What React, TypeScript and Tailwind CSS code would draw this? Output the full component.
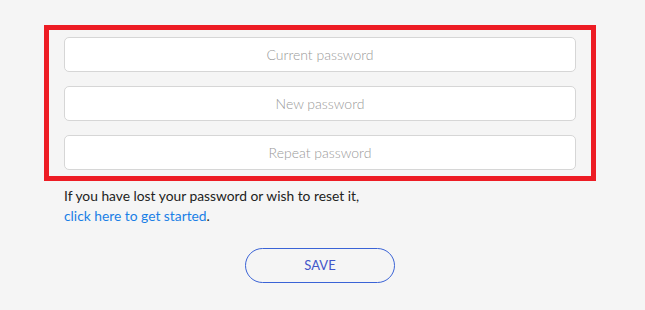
import React from "react";

export default function App() {
  const fields = ["Current password", "New password", "Repeat password"];

  return (
    <div
      className="w-[645px] h-[310px] bg-[#f5f5f5] pt-[25px] pl-[44px]"
      style={{ fontFamily: "Lato, 'Noto Sans', sans-serif" }}
    >
      <div className="w-[552px] border-[5px] border-[#ed1c24] px-[15px] pt-[7px] pb-[6px] flex flex-col gap-[14px]">
        {fields.map((f) => (
          <input
            key={f}
            type="password"
            placeholder={f}
            className="w-full h-[35px] bg-white border border-[#d6d6d6] rounded-[5px] text-center text-[14px] font-light placeholder:text-[#999] outline-none"
          />
        ))}
      </div>
      <p className="pl-[20px] mt-[5px] text-[13.8px] leading-[20px] text-[#222]">
        If you have lost your password or wish to reset it,
        <br />
        <a href="#" className="text-[#1a7fe6]">
          click here to get started
        </a>
        .
      </p>
      <div className="w-[552px] flex justify-center mt-[22px]">
        <button className="w-[150px] h-[35px] rounded-full border border-[#3a63d6] text-[13px] text-[#4256c9]">
          SAVE
        </button>
      </div>
    </div>
  );
}
